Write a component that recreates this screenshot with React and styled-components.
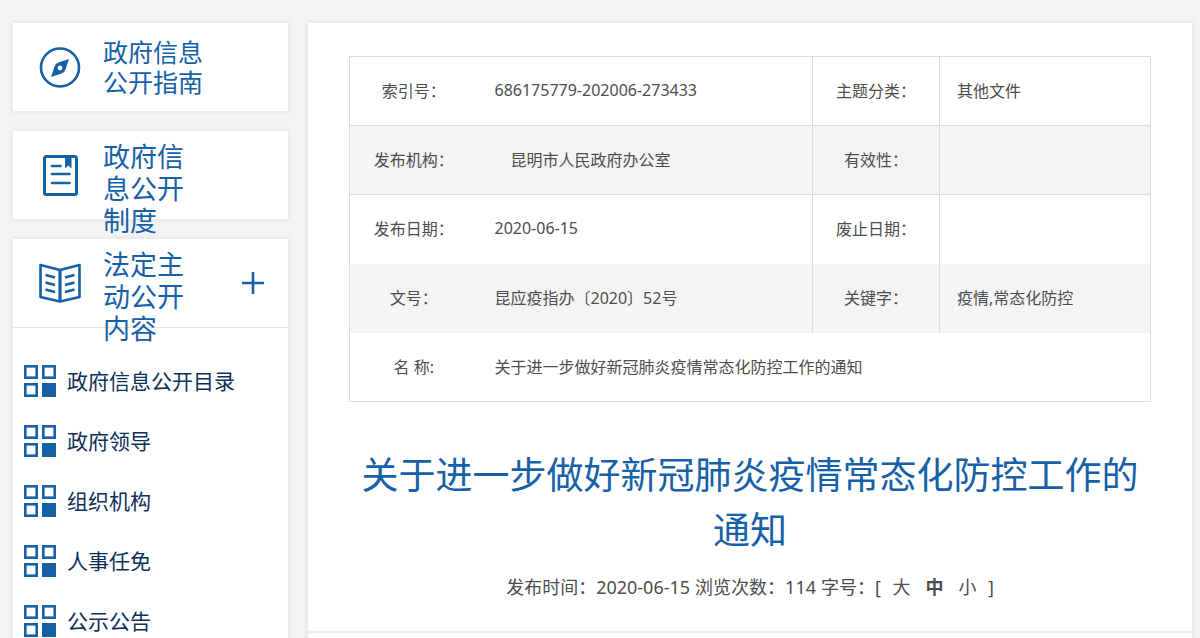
import React, { useState } from 'react';
import styled, { createGlobalStyle } from 'styled-components';

const BLUE = '#1660a8';

const GlobalStyle = createGlobalStyle`
  * {
    box-sizing: border-box;
  }

  body {
    margin: 0;
    background: #f3f3f3;
    color: #4d4d4d;
    font-family: 'Noto Sans', 'Noto Sans CJK SC', sans-serif;
    font-size: 16px;
  }
`;

const Page = styled.div`
  display: grid;
  grid-template-columns: 277px 1fr;
  gap: 18px;
  min-height: 100vh;
  padding: 22px 7px 0 12px;
`;

const Sidebar = styled.aside`
  display: flex;
  flex-direction: column;
  gap: 18px;
`;

const Panel = styled.section`
  background: #ffffff;
  border: 1px solid #ececec;
  box-shadow: 0 0 4px rgba(0, 0, 0, 0.08);
`;

const GuidePanel = styled(Panel)`
  height: 90px;
`;

const CatalogPanel = styled(Panel)`
  flex: 1;
`;

const PanelHead = styled.div`
  display: flex;
  align-items: flex-start;
  height: 88px;
  padding: 0 20px 0 26px;
`;

const CatalogHead = styled(PanelHead)`
  height: 89px;
  border-bottom: 1px solid #e4e4e4;
`;

const PanelLink = styled.a`
  display: flex;
  flex: 1;
  gap: 22px;
  color: ${BLUE};
  text-decoration: none;
`;

const PanelIcon = styled.svg`
  flex: none;
  width: 42px;
  height: 88px;
`;

const PanelTitle = styled.span`
  width: ${({ $narrow }) => ($narrow ? '84px' : '108px')};
  padding-top: ${({ $narrow }) => ($narrow ? '10px' : '14px')};
  font-size: ${({ $narrow }) => ($narrow ? '27px' : '25px')};
  line-height: ${({ $narrow }) => ($narrow ? '32px' : '30px')};
`;

const Toggle = styled.button`
  width: 30px;
  height: 88px;
  padding: 0;
  border: 0;
  background: none;
  color: ${BLUE};
  cursor: pointer;

  svg {
    display: block;
    margin: auto;
  }
`;

const CatalogList = styled.ul`
  margin: 0;
  padding: 23px 0 0 11px;
  list-style: none;
`;

const CatalogLink = styled.a`
  display: flex;
  align-items: center;
  gap: 11px;
  height: 60px;
  color: #0e2f58;
  font-size: 21px;
  line-height: 32px;
  text-decoration: none;
`;

const Article = styled(Panel).attrs({ as: 'main' })`
  padding: 33px 41px 0;
`;

const InfoTable = styled.table`
  width: 100%;
  border: 1px solid #dcdcdc;
  border-collapse: collapse;
  table-layout: fixed;
`;

const InfoRow = styled.tr`
  height: 69px;
  background: ${({ $shaded }) => ($shaded ? '#f4f4f4' : '#ffffff')};
  border-bottom: ${({ $line }) => ($line ? '1px solid #dcdcdc' : '0')};
`;

const InfoLabel = styled.th`
  padding: 0 0 2px;
  border-left: 1px solid #dcdcdc;
  font-weight: 400;
  text-align: center;
`;

const InfoValue = styled.td`
  padding: 0 17px 2px;
  border-left: ${({ $divided }) => ($divided ? '1px solid #dcdcdc' : '0')};
`;

const Title = styled.h1`
  margin: 45px 0 0;
  color: ${BLUE};
  font-size: 37px;
  font-weight: 400;
  line-height: 55px;
  text-align: center;
`;

const Meta = styled.div`
  display: flex;
  justify-content: center;
  gap: 5px;
  margin: 16px -41px 0;
  padding-bottom: 30px;
  border-bottom: 2px solid #eeeeee;
  font-size: 18px;
  line-height: 28px;
`;

const SizePicker = styled.span`
  display: flex;
  gap: 8px;
`;

const SizeButton = styled.button`
  width: 25px;
  padding: 0;
  border: 0;
  background: none;
  color: inherit;
  font-family: inherit;
  font-size: 18px;
  font-weight: ${({ $active }) => ($active ? 700 : 400)};
  line-height: 28px;
  cursor: pointer;
`;

const CompassIcon = () => (
  <PanelIcon viewBox="0 0 42 88" fill="none" aria-hidden="true">
    <circle cx="21" cy="44.500" r="19" stroke={BLUE} strokeWidth="2.600" />
    <path
      fill={BLUE}
      fillRule="evenodd"
      d="M30 36 26.500 46.500Q25.500 49.500 22.500 50.500L12 54 15.500 43.500Q16.500 40.500 19.500 39.500ZM21 42.600a2.400 2.400 0 1 0 0 4.800 2.400 2.400 0 0 0 0-4.800Z"
    />
  </PanelIcon>
);

const NoteIcon = () => (
  <PanelIcon viewBox="0 0 42 88" fill="none" aria-hidden="true">
    <rect x="5.500" y="25.500" width="32" height="38" rx="2" stroke={BLUE} strokeWidth="3" />
    <path d="M26 25h6.500v12.500l-3.250-3-3.250 3Z" fill={BLUE} />
    <path d="M13 35h8.500M13 43h17.500M13 52h17.500" stroke={BLUE} strokeWidth="2.600" strokeLinecap="round" />
  </PanelIcon>
);

const BookIcon = () => (
  <PanelIcon viewBox="0 0 42 88" fill="none" aria-hidden="true">
    <g stroke={BLUE} strokeWidth="2.600" strokeLinejoin="round">
      <path d="M21 31 1.500 26v32L21 62.500 40.500 58V26Z" />
      <path d="M21 31v31" strokeWidth="3.200" />
      <path d="M6.500 36 16 38.500M6.500 43.500 16 46M6.500 50.500 16 53M35.500 36 26 38.500M35.500 43.500 26 46M35.500 50.500 26 53" />
    </g>
  </PanelIcon>
);

const PlusIcon = () => (
  <svg width="22" height="22" viewBox="0 0 22 22" aria-hidden="true">
    <path d="M11 0v22M0 11h22" stroke="currentColor" strokeWidth="2.600" />
  </svg>
);

const TilesIcon = () => (
  <svg width="32" height="32" viewBox="0 0 32 32" fill="none" aria-hidden="true">
    <g stroke={BLUE} strokeWidth="2.600">
      <rect x="1.300" y="1.300" width="11.400" height="11.400" />
      <rect x="19.300" y="1.300" width="11.400" height="11.400" />
      <rect x="1.300" y="19.300" width="11.400" height="11.400" />
    </g>
    <rect x="18" y="18" width="14" height="14" fill={BLUE} />
  </svg>
);

const catalog = ['政府信息公开目录', '政府领导', '组织机构', '人事任免', '公示公告'];

const infoRows = [
  { cells: ['索引号：', '686175779-202006-273433', '主题分类：', '其他文件'], line: true },
  { cells: ['发布机构：', '\u3000昆明市人民政府办公室', '有效性：', ''], line: true, shaded: true },
  { cells: ['发布日期：', '2020-06-15', '废止日期：', ''] },
  { cells: ['文号：', '昆应疫指办〔2020〕52号', '关键字：', '疫情,常态化防控'], shaded: true }
];

const sizes = ['大', '中', '小'];

function App() {
  const [open, setOpen] = useState(true);
  const [size, setSize] = useState('中');

  return (
    <>
      <GlobalStyle />
      <Page>
        <Sidebar>
          <GuidePanel>
            <PanelHead>
              <PanelLink href="#guide">
                <CompassIcon />
                <PanelTitle>政府信息公开指南</PanelTitle>
              </PanelLink>
            </PanelHead>
          </GuidePanel>
          <GuidePanel>
            <PanelHead>
              <PanelLink href="#rules">
                <NoteIcon />
                <PanelTitle $narrow>政府信息公开制度</PanelTitle>
              </PanelLink>
            </PanelHead>
          </GuidePanel>
          <CatalogPanel>
            <CatalogHead>
              <PanelLink href="#catalog">
                <BookIcon />
                <PanelTitle $narrow>法定主动公开内容</PanelTitle>
              </PanelLink>
              <Toggle
                type="button"
                aria-label="法定主动公开内容"
                aria-expanded={open}
                onClick={() => setOpen(!open)}
              >
                <PlusIcon />
              </Toggle>
            </CatalogHead>
            {open && (
              <CatalogList>
                {catalog.map(name => (
                  <li key={name}>
                    <CatalogLink href={`#${name}`}>
                      <TilesIcon />
                      {name}
                    </CatalogLink>
                  </li>
                ))}
              </CatalogList>
            )}
          </CatalogPanel>
        </Sidebar>

        <Article>
          <InfoTable>
            <colgroup>
              <col width="128" />
              <col />
              <col width="127" />
              <col width="211" />
            </colgroup>
            <tbody>
              {infoRows.map(({ cells, line, shaded }) => (
                <InfoRow key={cells[0]} $line={line} $shaded={shaded}>
                  <InfoLabel scope="row">{cells[0]}</InfoLabel>
                  <InfoValue>{cells[1]}</InfoValue>
                  <InfoLabel scope="row">{cells[2]}</InfoLabel>
                  <InfoValue $divided>{cells[3]}</InfoValue>
                </InfoRow>
              ))}
              <InfoRow>
                <InfoLabel scope="row">名 称:</InfoLabel>
                <InfoValue colSpan={3}>关于进一步做好新冠肺炎疫情常态化防控工作的通知</InfoValue>
              </InfoRow>
            </tbody>
          </InfoTable>

          <Title>关于进一步做好新冠肺炎疫情常态化防控工作的通知</Title>

          <Meta>
            <span>发布时间：2020-06-15</span>
            <span>浏览次数：114</span>
            <SizePicker>
              <span>字号：[</span>
              {sizes.map(name => (
                <SizeButton
                  key={name}
                  type="button"
                  $active={name === size}
                  aria-pressed={name === size}
                  onClick={() => setSize(name)}
                >
                  {name}
                </SizeButton>
              ))}
              <span>]</span>
            </SizePicker>
          </Meta>
        </Article>
      </Page>
    </>
  );
}

export default App;
